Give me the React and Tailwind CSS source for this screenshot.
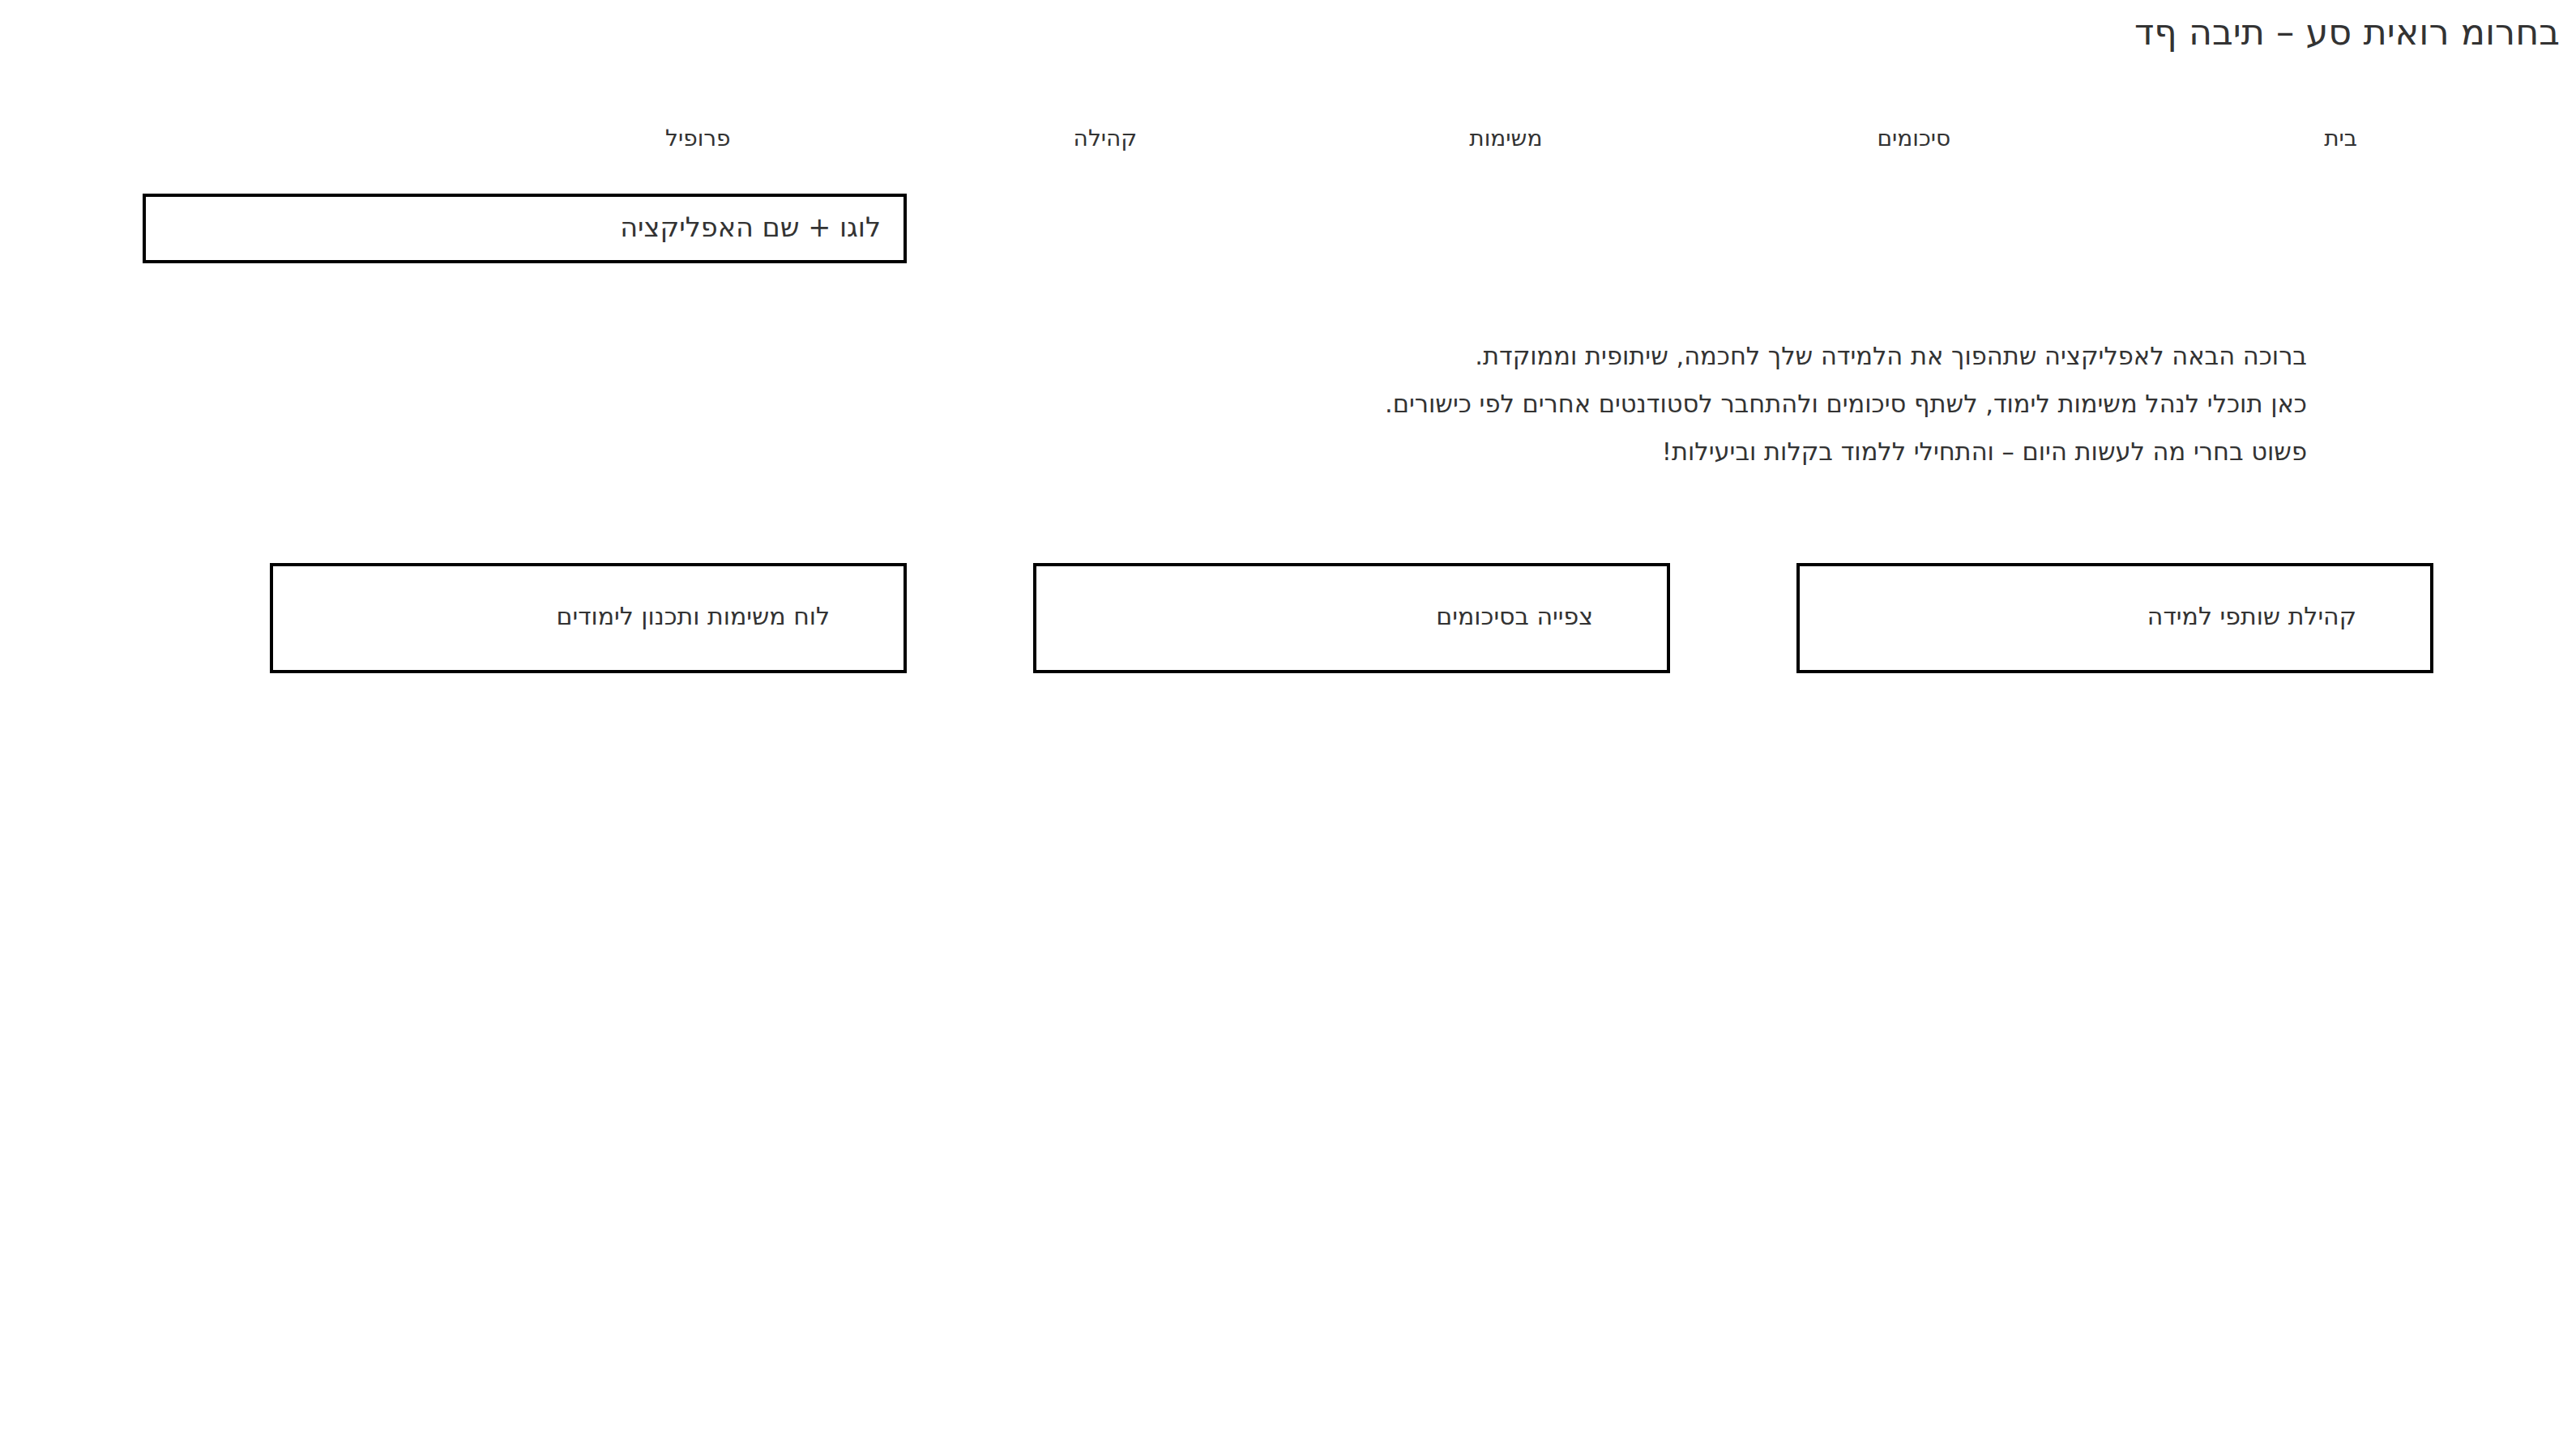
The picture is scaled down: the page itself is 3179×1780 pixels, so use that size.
import React from 'react';

const navItems = ['בית', 'סיכומים', 'משימות', 'קהילה', 'פרופיל'];

const features = ['קהילת שותפי למידה', 'צפייה בסיכומים', 'לוח משימות ותכנון לימודים'];

const App = () => {
	return (
		<div dir="rtl" className="min-h-screen w-full bg-white text-[#333333] font-['DejaVu_Sans',sans-serif]">
			{/* Header title */}
			<h1 className="pt-[16px] pr-[20px] text-[44.5px] leading-[48px] font-normal">בחרומ רואית סע – תיבה ףד</h1>

			{/* Nav */}
			<nav className="mt-[90px] flex pr-[270px] text-[28px] leading-[34px]">
				{navItems.map((item, i) => (
					<a key={item} href="#" className={i === 0 ? 'ml-[461px]' : i === 1 ? 'ml-[413px]' : i === 2 ? 'ml-[410px]' : 'ml-[423px]'}>
						{item}
					</a>
				))}
			</nav>

			{/* Logo box */}
			<div className="mt-[51px] ml-[176px] mr-auto flex h-[86px] w-[943px] items-center border-4 border-black pr-[28px] pb-[2px] text-[33.5px]">
				לוגו + שם האפליקציה
			</div>

			{/* Intro text */}
			<div className="mt-[85px] pr-[332px] text-[30.5px] leading-[59px]">
				<p>ברוכה הבאה לאפליקציה שתהפוך את הלמידה שלך לחכמה, שיתופית וממוקדת.</p>
				<p>כאן תוכלי לנהל משימות לימוד, לשתף סיכומים ולהתחבר לסטודנטים אחרים לפי כישורים.</p>
				<p>פשוט בחרי מה לעשות היום – והתחילי ללמוד בקלות וביעילות!</p>
			</div>

			{/* Feature cards */}
			<div className="mt-[108px] flex gap-[156px] pr-[176px]">
				{features.map((f) => (
					<div key={f} className="flex h-[136px] w-[786px] items-center border-4 border-black pr-[91px] pb-[6px] text-[30px]">
						{f}
					</div>
				))}
			</div>
		</div>
	);
};

export default App;
